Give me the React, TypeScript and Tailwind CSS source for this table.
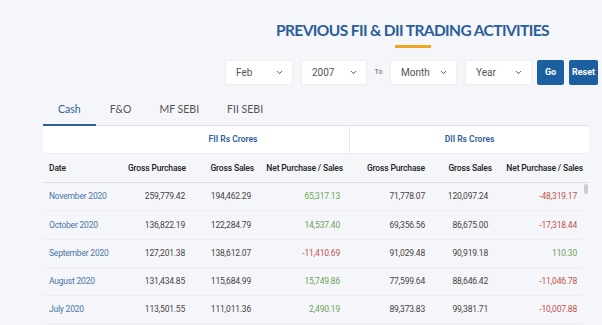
import { ChevronDown } from "lucide-react";

type Row = {
  date: string;
  fiiBuy: string;
  fiiSell: string;
  fiiNet: string;
  diiBuy: string;
  diiSell: string;
  diiNet: string;
};

const rows: Row[] = [
  { date: "November 2020", fiiBuy: "259,779.42", fiiSell: "194,462.29", fiiNet: "65,317.13", diiBuy: "71,778.07", diiSell: "120,097.24", diiNet: "-48,319.17" },
  { date: "October 2020", fiiBuy: "136,822.19", fiiSell: "122,284.79", fiiNet: "14,537.40", diiBuy: "69,356.56", diiSell: "86,675.00", diiNet: "-17,318.44" },
  { date: "September 2020", fiiBuy: "127,201.38", fiiSell: "138,612.07", fiiNet: "-11,410.69", diiBuy: "91,029.48", diiSell: "90,919.18", diiNet: "110.30" },
  { date: "August 2020", fiiBuy: "131,434.85", fiiSell: "115,684.99", fiiNet: "15,749.86", diiBuy: "77,599.64", diiSell: "88,646.42", diiNet: "-11,046.78" },
  { date: "July 2020", fiiBuy: "113,501.55", fiiSell: "111,011.36", fiiNet: "2,490.19", diiBuy: "89,373.83", diiSell: "99,381.71", diiNet: "-10,007.88" },
];

const tabs = ["Cash", "F&O", "MF SEBI", "FII SEBI"];

// net value colour: red if negative
const netColor = (v: string) => (v.startsWith("-") ? "text-[#c2524f]" : "text-[#6aa456]");

const Select = ({ label, width }: { label: string; width: string }) => (
  <div
    className={`${width} h-[25px] bg-white border border-[#eceef2] rounded-[2px] flex items-center justify-between pl-[10px] pr-[8px] text-[10px] text-[#555]`}
  >
    <span>{label}</span>
    <ChevronDown size={9} strokeWidth={2.5} className="text-[#444]" />
  </div>
);

const App = () => {
  return (
    <div className="w-[602px] h-[325px] overflow-hidden bg-[#f5f6f9] font-['Roboto',sans-serif]">
      {/* title + filters */}
      <div className="ml-auto w-[377px] pr-[2px] flex flex-col items-center pt-[19px]">
        <h1 className="font-['Lato',sans-serif] font-bold text-[15.5px] leading-[22px] tracking-[-0.6px] text-[#2a5d9b] whitespace-nowrap">
          PREVIOUS FII &amp; DII TRADING ACTIVITIES
        </h1>
        <div className="mt-[4px] w-[36px] h-[3px] bg-[#efa521]" />
        <div className="mt-[12px] w-full flex items-center">
          <Select label="Feb" width="w-[68px]" />
          <div className="w-[8px]" />
          <Select label="2007" width="w-[66px]" />
          <span className="w-[23px] text-center text-[7px] text-[#666]">To</span>
          <Select label="Month" width="w-[67px]" />
          <div className="w-[8px]" />
          <Select label="Year" width="w-[67px]" />
          <button className="ml-[5px] w-[27px] h-[25px] bg-[#1c5fa1] text-white text-[9px] font-bold rounded-[2px]">
            Go
          </button>
          <button className="ml-[5px] w-[29px] h-[25px] bg-[#1c5fa1] text-white text-[9px] font-bold rounded-[2px]">
            Reset
          </button>
        </div>
      </div>

      {/* tabs */}
      <div className="ml-[43px] w-[546px] mt-[9px] flex border-b border-[#dfe3e8]">
        {tabs.map((t, i) => (
          <div
            key={t}
            className={`pt-[8px] pb-[8px] text-[10.5px] leading-[14px] font-['Lato',sans-serif] whitespace-nowrap ${
              i === 0
                ? "px-[15px] text-[#2b5d9b] border-b-2 border-[#2d5f9e] -mb-px"
                : "px-[14px] text-[#555] border-b-2 border-transparent -mb-px"
            }`}
          >
            {t}
          </div>
        ))}
      </div>

      {/* table */}
      <div className="ml-[43px] w-[546px]">
        <div className="flex h-[28px] bg-white border-b border-[#eceef1] text-[8.5px] font-semibold text-[#2f5e9c]">
          <div className="w-[306px] flex items-center justify-center pl-[74px]">FII Rs Crores</div>
          <div className="flex-1 flex items-center justify-center border-l border-[#e6e8ec]">DII Rs Crores</div>
        </div>
        <div className="grid grid-cols-[67px_82px_68px_89px_82px_67px_91px] h-[29px] items-center border-b border-[#d9dde2] text-[8.5px] font-medium text-[#222] tracking-[-0.15px] whitespace-nowrap">
          <div className="pl-[6px]">Date</div>
          <div className="text-right pr-[6px]">Gross Purchase</div>
          <div className="text-right pr-[6px]">Gross Sales</div>
          <div className="text-right pr-[6px]">Net Purchase / Sales</div>
          <div className="text-right pr-[6px]">Gross Purchase</div>
          <div className="text-right pr-[6px]">Gross Sales</div>
          <div className="text-right pr-[6px]">Net Purchase / Sales</div>
        </div>
        <div className="flex">
          <div className="w-[540px]">
            {rows.map((r) => (
              <div
                key={r.date}
                className="grid grid-cols-[67px_81px_66px_89px_85px_63px_89px] h-[28.3px] items-center border-b border-[#eceef2] text-[8.5px] tracking-[-0.2px] text-[#444] whitespace-nowrap"
              >
                <div className="pl-[6px] text-[#4a74a8]">{r.date}</div>
                <div className="text-right pr-[6px]">{r.fiiBuy}</div>
                <div className="text-right pr-[6px]">{r.fiiSell}</div>
                <div className={`text-right pr-[6px] ${netColor(r.fiiNet)}`}>{r.fiiNet}</div>
                <div className="text-right pr-[6px]">{r.diiBuy}</div>
                <div className="text-right pr-[6px]">{r.diiSell}</div>
                <div className={`text-right pr-[6px] ${netColor(r.diiNet)}`}>{r.diiNet}</div>
              </div>
            ))}
          </div>
          <div className="w-[6px] pt-[1px] pl-[1px]">
            <div className="w-[4px] h-[10px] rounded-full bg-[#c9cbcf]" />
          </div>
        </div>
      </div>
    </div>
  );
};

export default App;
